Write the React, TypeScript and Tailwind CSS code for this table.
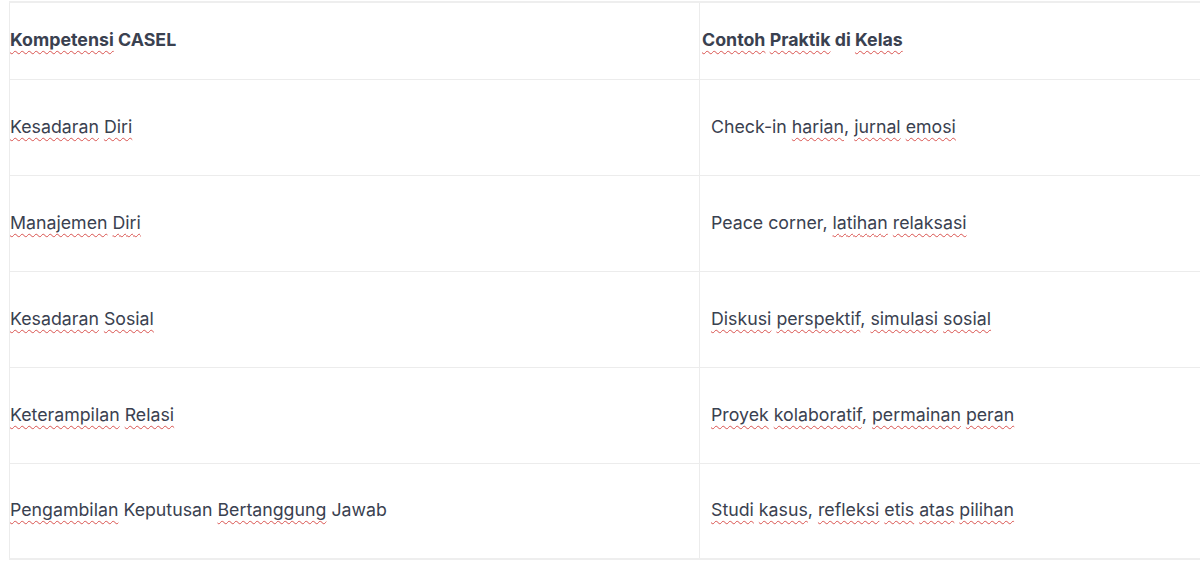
import React from 'react';

type Word = { t: string; s?: boolean };

// s = marked by the spell checker (wavy red underline)
const w = (text: string, marked: string[]): Word[] =>
  text.split(' ').map((t) => ({ t, s: marked.includes(t.replace(/,$/, '')) }));

const rows: { left: Word[]; right: Word[] }[] = [
  {
    left: w('Kesadaran Diri', ['Kesadaran', 'Diri']),
    right: w('Check-in harian, jurnal emosi', ['harian', 'jurnal', 'emosi']),
  },
  {
    left: w('Manajemen Diri', ['Manajemen', 'Diri']),
    right: w('Peace corner, latihan relaksasi', ['latihan', 'relaksasi']),
  },
  {
    left: w('Kesadaran Sosial', ['Kesadaran', 'Sosial']),
    right: w('Diskusi perspektif, simulasi sosial', ['Diskusi', 'perspektif', 'simulasi', 'sosial']),
  },
  {
    left: w('Keterampilan Relasi', ['Keterampilan', 'Relasi']),
    right: w('Proyek kolaboratif, permainan peran', ['Proyek', 'kolaboratif', 'permainan', 'peran']),
  },
  {
    left: w('Pengambilan Keputusan Bertanggung Jawab', ['Pengambilan', 'Bertanggung']),
    right: w('Studi kasus, refleksi etis atas pilihan', ['Studi', 'kasus', 'refleksi', 'etis', 'atas', 'pilihan']),
  },
];

const Text: React.FC<{ words: Word[] }> = ({ words }) => (
  <>
    {words.map((word, i) => {
      const comma = word.t.endsWith(',');
      const base = comma ? word.t.slice(0, -1) : word.t;
      return (
        <React.Fragment key={i}>
          {i > 0 && ' '}
          <span
            className={
              word.s
                ? 'underline decoration-wavy decoration-[#d9534f] decoration-[1.3px] underline-offset-[4px]'
                : ''
            }
          >
            {base}
          </span>
          {comma && ','}
        </React.Fragment>
      );
    })}
  </>
);

export default function App() {
  return (
    <div
      className="w-[1200px] h-[564px] overflow-hidden bg-white pt-px pl-[9px]"
      style={{ fontFamily: 'Inter, "Noto Sans", sans-serif' }}
    >
      <table className="w-[1240px] table-fixed border-collapse text-[17.75px] text-[#3a4150]">
        <colgroup>
          <col className="w-[690px]" />
          <col />
        </colgroup>
        <thead>
          <tr className="h-[77px] border-t-2 border-[#eeeeee]">
            <th className="border-l border-[#ececec] text-left text-[17.8px] font-bold align-middle">
              <Text words={w('Kompetensi CASEL', ['Kompetensi'])} />
            </th>
            <th className="border-l border-[#ececec] text-left text-[17.8px] font-bold align-middle pl-[2px]">
              <Text words={w('Contoh Praktik di Kelas', ['Contoh', 'Praktik', 'Kelas'])} />
            </th>
          </tr>
        </thead>
        <tbody>
          {rows.map((r, i) => (
            <tr
              key={i}
              className={`h-[96px] border-t border-[#ececec] ${
                i === rows.length - 1 ? 'border-b-2 border-b-[#eeeeee]' : ''
              }`}
            >
              <td className="border-l border-[#ececec] align-middle">
                <Text words={r.left} />
              </td>
              <td className="border-l border-[#ececec] align-middle pl-[11px]">
                <Text words={r.right} />
              </td>
            </tr>
          ))}
        </tbody>
      </table>
    </div>
  );
}
